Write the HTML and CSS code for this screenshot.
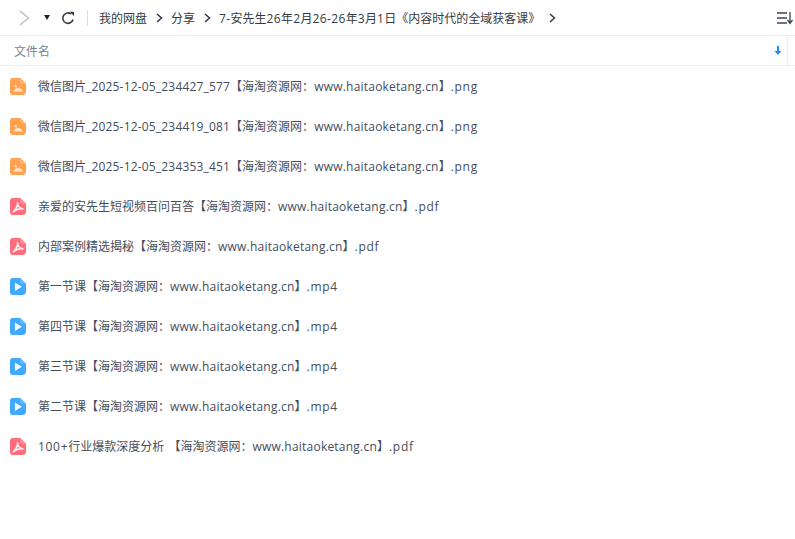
FILE: index.html
```html
<!DOCTYPE html>
<html lang="zh">
  <head>
    <meta charset="utf-8">
    <title>文件列表</title>
    <link rel="stylesheet" href="styles.css">
  </head>
  <body>
    <svg class="defs" width="0" height="0">
      <defs>
        <path id="sheet" d="M3 0H11.5L18 6.5V15.5C18 17.4 16.4 19 14.5 19H3C1.3 19 0 17.7 0 16V3C0 1.3 1.3 0 3 0Z"/>
        <g id="icon-img">
          <use href="#sheet" fill="#ffa14f"/>
          <path d="M11.5 0L18 6.5H13.5C12.4 6.5 11.5 5.6 11.5 4.5Z" fill="#ffb377"/>
          <circle cx="6.4" cy="9" r="1.3" fill="#ffe6d2"/>
          <path d="M3.5 15L7.8 10.4L9.8 12.4L11.2 11L14.5 15Z" fill="#ffe6d2"/>
        </g>
        <g id="icon-pdf">
          <use href="#sheet" fill="#ff6d7d"/>
          <path d="M11.5 0L18 6.5H13.5C12.4 6.5 11.5 5.6 11.5 4.5Z" fill="#ff8e9b"/>
          <path d="M3.5 15.5C6 14 8.5 9.5 8.6 5.3C8.7 8.5 10.5 11.5 14.5 12.1C11 11.8 7 12.5 3.5 15.5Z" fill="none" stroke="#fff0f1" stroke-width="1.7" stroke-linejoin="round"/>
        </g>
        <g id="icon-video">
          <use href="#sheet" fill="#3fa9ff"/>
          <path d="M11.5 0L18 6.5H13.5C12.4 6.5 11.5 5.6 11.5 4.5Z" fill="#6cbcff"/>
          <path d="M5.5 5L13.5 9.8L5.5 14.6Z" fill="#eef8ff"/>
        </g>
      </defs>
    </svg>

    <div class="toolbar">
      <svg class="nav-forward" width="11" height="16" viewBox="0 0 11 16"><path d="M1 1L9.5 8L1 15" fill="none" stroke="#bdbdbd" stroke-width="1.4"/></svg>
      <span class="nav-caret"></span>
      <svg class="nav-refresh" width="14" height="14" viewBox="0 0 14 14"><path d="M12 8.5A5.2 5.2 0 1 1 10.4 3.2" fill="none" stroke="#333a44" stroke-width="1.6"/><path d="M9 0.5L13 1V5.3Z" fill="#333a44"/></svg>
      <span class="toolbar-sep"></span>
      <span class="crumb crumb-first">我的网盘</span>
      <svg class="crumb-arrow" width="7" height="10" viewBox="0 0 7 10"><path d="M1 1L5.5 5L1 9" fill="none" stroke="#333a44" stroke-width="1.5"/></svg>
      <span class="crumb">分享</span>
      <svg class="crumb-arrow" width="7" height="10" viewBox="0 0 7 10"><path d="M1 1L5.5 5L1 9" fill="none" stroke="#333a44" stroke-width="1.5"/></svg>
      <span class="crumb"><span class="num">7-</span>安先生<span class="num">26</span>年<span class="num">2</span>月<span class="num">26-26</span>年<span class="num">3</span>月<span class="num">1</span>日《内容时代的全域获客课》</span>
      <svg class="crumb-arrow" width="7" height="10" viewBox="0 0 7 10"><path d="M1 1L5.5 5L1 9" fill="none" stroke="#333a44" stroke-width="1.5"/></svg>
      <svg class="sort-menu" width="18" height="14" viewBox="0 0 18 14"><path d="M0 2H10M0 7H10M0 12H10" stroke="#3d4450" stroke-width="1.4"/><path d="M13 1V11M10.5 9L13 12.5L15.5 9" fill="none" stroke="#3d4450" stroke-width="1.3"/></svg>
    </div>

    <div class="list-head">
      <span class="head-name">文件名</span>
      <svg class="head-sort" width="8" height="10" viewBox="0 0 8 10"><path d="M4 0V6" stroke="#1890ff" stroke-width="2"/><path d="M0.5 5H7.5L4 9Z" fill="#1890ff"/></svg>
      <span class="head-divider"></span>
    </div>

    <ul class="files">
      <li class="file"><svg class="file-icon" viewBox="0 0 18 19"><use href="#icon-img"/></svg><span>微信图片<span class="stamp">_2025-12-05_234427_577</span>【海淘资源网：<span class="latin">www.haitaoketang.cn</span>】<span class="ext">.png</span></span></li>
      <li class="file"><svg class="file-icon" viewBox="0 0 18 19"><use href="#icon-img"/></svg><span>微信图片<span class="stamp">_2025-12-05_234419_081</span>【海淘资源网：<span class="latin">www.haitaoketang.cn</span>】<span class="ext">.png</span></span></li>
      <li class="file"><svg class="file-icon" viewBox="0 0 18 19"><use href="#icon-img"/></svg><span>微信图片<span class="stamp">_2025-12-05_234353_451</span>【海淘资源网：<span class="latin">www.haitaoketang.cn</span>】<span class="ext">.png</span></span></li>
      <li class="file"><svg class="file-icon" viewBox="0 0 18 19"><use href="#icon-pdf"/></svg><span>亲爱的安先生短视频百问百答【海淘资源网：<span class="latin">www.haitaoketang.cn</span>】<span class="ext">.pdf</span></span></li>
      <li class="file"><svg class="file-icon" viewBox="0 0 18 19"><use href="#icon-pdf"/></svg><span>内部案例精选揭秘【海淘资源网：<span class="latin">www.haitaoketang.cn</span>】<span class="ext">.pdf</span></span></li>
      <li class="file"><svg class="file-icon" viewBox="0 0 18 19"><use href="#icon-video"/></svg><span>第一节课【海淘资源网：<span class="latin">www.haitaoketang.cn</span>】<span class="ext">.mp4</span></span></li>
      <li class="file"><svg class="file-icon" viewBox="0 0 18 19"><use href="#icon-video"/></svg><span>第四节课【海淘资源网：<span class="latin">www.haitaoketang.cn</span>】<span class="ext">.mp4</span></span></li>
      <li class="file"><svg class="file-icon" viewBox="0 0 18 19"><use href="#icon-video"/></svg><span>第三节课【海淘资源网：<span class="latin">www.haitaoketang.cn</span>】<span class="ext">.mp4</span></span></li>
      <li class="file"><svg class="file-icon" viewBox="0 0 18 19"><use href="#icon-video"/></svg><span>第二节课【海淘资源网：<span class="latin">www.haitaoketang.cn</span>】<span class="ext">.mp4</span></span></li>
      <li class="file"><svg class="file-icon" viewBox="0 0 18 19"><use href="#icon-pdf"/></svg><span><span class="ext">100+</span>行业爆款深度分析<span class="gap"> </span>【海淘资源网：<span class="latin">www.haitaoketang.cn</span>】<span class="ext">.pdf</span></span></li>
    </ul>
  </body>
</html>
```

FILE: styles.css
```css
body {
  margin: 0;
  background-color: #fff;
  color: #454d5a;
  font-family: "Open Sans", "Noto Sans CJK SC", sans-serif;
  font-size: 12px;
  overflow: hidden;
}

.defs {
  display: block;
  height: 0;
}

/* the latin glyphs run a bit narrow next to the reference */
.latin {
  letter-spacing: 0.22px;
}
.stamp {
  letter-spacing: 0.18px;
}
.num {
  letter-spacing: 0.4px;
}
.ext {
  letter-spacing: 0.7px;
}
.gap {
  white-space: pre;
  letter-spacing: 1px;
}

.toolbar {
  display: flex;
  align-items: center;
  height: 35px;
  border-bottom: 1px solid #eeeeee;
  color: #333a44;
}
.nav-forward {
  margin-left: 19px;
}
.nav-caret {
  width: 0;
  height: 0;
  margin-left: 14px;
  border-left: 3.5px solid transparent;
  border-right: 3.5px solid transparent;
  border-top: 5px solid #222;
}
.nav-refresh {
  margin-left: 11px;
}
.toolbar-sep {
  width: 1px;
  height: 16px;
  margin-left: 12px;
  background-color: #dddddd;
}
.crumb {
  margin-left: 8px;
  white-space: nowrap;
}
.crumb-first {
  margin-left: 11px;
}
.crumb-arrow {
  margin-left: 9px;
}
.sort-menu {
  margin-left: auto;
}

.list-head {
  display: flex;
  align-items: center;
  height: 29px;
  border-bottom: 1px solid #eeeeee;
  padding-left: 14px;
  color: #7b8390;
}
.head-sort {
  margin-left: auto;
}
.head-divider {
  width: 1px;
  height: 29px;
  margin-left: 5px;
  margin-right: 7px;
  background-color: #eeeeee;
}

.files {
  list-style: none;
  margin: 0;
  padding: 0;
}
.file {
  display: flex;
  align-items: center;
  height: 40px;
  padding-left: 10px;
  white-space: nowrap;
}
.file-icon {
  width: 16px;
  height: 17px;
  margin-right: 12px;
  flex: none;
}
```
